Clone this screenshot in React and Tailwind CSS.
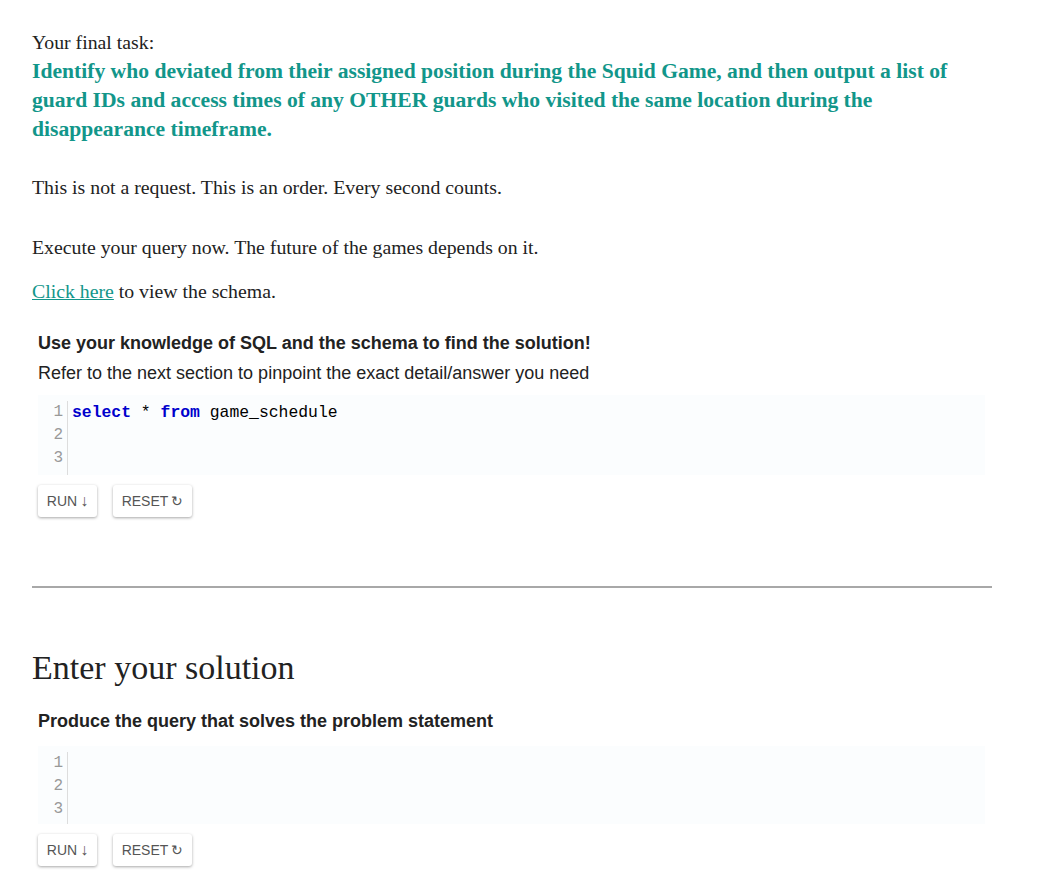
import React from "react";

const serif = { fontFamily: 'Georgia, "Liberation Serif", serif' };
const sans = { fontFamily: '"Liberation Sans", Arial, sans-serif' };
const mono = { fontFamily: '"Liberation Mono", Consolas, monospace' };

function Editor({ lines, tall }) {
  return (
    <div className={`ml-[6px] mr-[7px] ${tall ? "h-[80px]" : "h-[78px]"} bg-[#fbfdfe] flex pt-[6px]`} style={mono}>
      <div className="w-[30px] border-r border-[#dddddd] flex flex-col items-end pr-[4px] text-[#999999] text-[16px] leading-[23px]">
        <div>1</div>
        <div>2</div>
        <div>3</div>
      </div>
      <div className="pl-[4px] text-[16.4px] leading-[23px] text-black">
        {lines.map((l, i) => (
          <div key={i} className="h-[23px] whitespace-pre">{l}</div>
        ))}
      </div>
    </div>
  );
}

function Buttons() {
  return (
    <div className="ml-[6px] mt-[10px] flex gap-[16px] text-[14px] text-[#555555]" style={sans}>
      <button className="h-[32px] w-[59px] rounded-[3px] bg-white shadow-[0_1px_3px_rgba(0,0,0,0.35)] flex items-center justify-center">
        RUN <span className="ml-[3px] text-[16px]">↓</span>
      </button>
      <button className="h-[32px] w-[79px] rounded-[3px] bg-white shadow-[0_1px_3px_rgba(0,0,0,0.35)] flex items-center justify-center">
        RESET <span className="ml-[3px]">↻</span>
      </button>
    </div>
  );
}

export default function App() {
  return (
    <div className="w-[1064px] min-h-[877px] bg-white pl-[32px] pr-[72px] pt-[28px] text-[#222222]">
      <div className="text-[19.8px] leading-[29px]" style={serif}>
        <p>Your final task:</p>
        <p className="font-bold text-[#12968a] text-[21.6px]">
          Identify who deviated from their assigned position during the Squid Game, and then output a list of guard IDs and access times of any OTHER guards who visited the same location during the disappearance timeframe.
        </p>
        <p className="mt-[29px]">This is not a request. This is an order. Every second counts.</p>
        <p className="mt-[31px]">Execute your query now. The future of the games depends on it.</p>
        <p className="mt-[15px]">
          <a className="text-[#12968a] underline" href="#">Click here</a> to view the schema.
        </p>
      </div>

      <div className="mt-[22px] ml-[6px] text-[18px] leading-[30px] text-[#222222]" style={sans}>
        <div className="font-bold">Use your knowledge of SQL and the schema to find the solution!</div>
        <div>Refer to the next section to pinpoint the exact detail/answer you need</div>
      </div>

      <div className="mt-[7px]">
        <Editor
          tall
          lines={[
            <span key="a">
              <span className="font-bold text-[#0000cc]">select</span> * <span className="font-bold text-[#0000cc]">from</span> game_schedule
            </span>,
            "",
            "",
          ]}
        />
      </div>
      <Buttons />

      <hr className="mt-[69px] border-t-[2px] border-[#a8a8a8]" />

      <h2 className="mt-[60px] text-[34px] leading-[40px] text-[#222222]" style={serif}>
        Enter your solution
      </h2>

      <div className="mt-[18px] ml-[6px] font-bold text-[18px] leading-[30px]" style={sans}>
        Produce the query that solves the problem statement
      </div>

      <div className="mt-[10px]">
        <Editor lines={["", "", ""]} />
      </div>
      <Buttons />
    </div>
  );
}
